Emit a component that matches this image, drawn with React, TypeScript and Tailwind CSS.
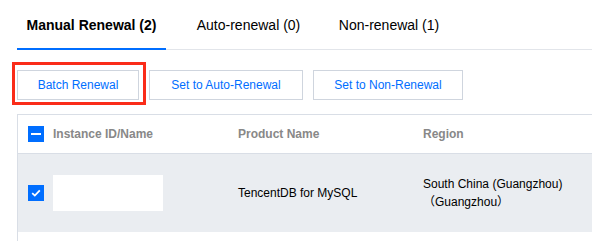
import React from 'react';

const Checkbox = ({ mode }: { mode: 'checked' | 'indeterminate' }) => (
  <div className="flex h-4 w-4 shrink-0 items-center justify-center bg-[#006eff]">
    {mode === 'checked' ? (
      <svg width="10" height="8" viewBox="0 0 10 8" fill="none">
        <path d="M1.2 4.2 L3.8 6.6 L8.8 1.4" stroke="white" strokeWidth="1.8" />
      </svg>
    ) : (
      <div className="h-[2px] w-[10px] bg-white" />
    )}
  </div>
);

export default function App() {
  return (
    <div
      className="relative h-[241px] w-[592px] overflow-hidden bg-white text-black"
      style={{ fontFamily: '"Liberation Sans", "Noto Sans CJK SC", Arial, sans-serif' }}
    >
      {/* Tabs */}
      <div className="ml-[17px] flex h-[50px] border-b border-[#e2e5ea]">
        <div className="-mb-px flex h-[50px] w-[149px] items-center justify-center border-b-2 border-[#006eff] pt-[2px] text-[14px] font-bold">
          Manual Renewal (2)
        </div>
        <div className="flex h-[49px] w-[165px] items-center justify-center pt-[2px] text-[14px]">
          Auto-renewal (0)
        </div>
        <div className="flex h-[49px] w-[116px] items-center justify-center pt-[2px] text-[14px]">
          Non-renewal (1)
        </div>
      </div>

      {/* Action buttons */}
      <div className="ml-[17px] mt-[20px] flex gap-[10px]">
        <div className="relative">
          <button className="flex h-[30px] w-[122px] items-center justify-center border border-[#cfd5de] text-[12px] text-[#006eff]">
            Batch Renewal
          </button>
          {/* highlight marker */}
          <div className="pointer-events-none absolute left-[-5px] top-[-8px] h-[43px] w-[134px] border-[3px] border-[#fa2c19]" />
        </div>
        <button className="flex h-[30px] w-[154px] items-center justify-center border border-[#cfd5de] text-[12px] text-[#006eff]">
          Set to Auto-Renewal
        </button>
        <button className="flex h-[30px] w-[150px] items-center justify-center border border-[#cfd5de] text-[12px] text-[#006eff]">
          Set to Non-Renewal
        </button>
      </div>

      {/* Table */}
      <div className="ml-[17px] mt-[14px] h-[200px] border-l border-t border-[#d9dee6]">
        <div className="flex h-[39px] items-center border-b border-[#d9dee6] text-[12px] font-bold text-[#888888]">
          <div className="flex w-[220px] items-center gap-[9px] pl-[10px]">
            <Checkbox mode="indeterminate" />
            <span>Instance ID/Name</span>
          </div>
          <div className="w-[185px]">Product Name</div>
          <div>Region</div>
        </div>
        <div className="flex h-[78px] items-center bg-[#eaedf1] text-[12px]">
          <div className="flex w-[220px] items-center gap-[9px] pl-[10px]">
            <Checkbox mode="checked" />
            <div className="h-[36px] w-[110px] bg-white" />
          </div>
          <div className="w-[185px]">TencentDB for MySQL</div>
          <div className="leading-[18px]">
            <div>South China (Guangzhou)</div>
            <div>（Guangzhou）</div>
          </div>
        </div>
      </div>
    </div>
  );
}
